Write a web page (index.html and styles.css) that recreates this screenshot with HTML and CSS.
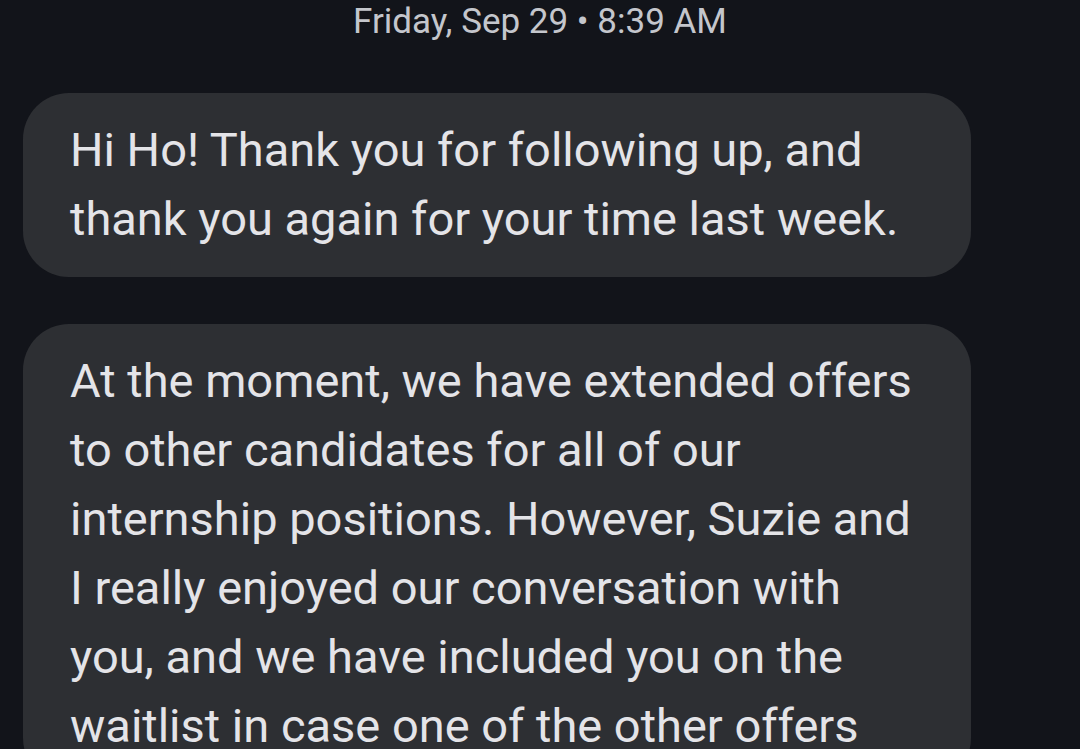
FILE: index.html
```html
<!DOCTYPE html>
<html lang="en">
<head>
    <meta charset="UTF-8">
    <meta name="viewport" content="width=device-width, initial-scale=1.0">
    <title>Messages</title>
    <link rel="stylesheet" href="styles.css">
</head>
<body>
    <div class="thread">
        <div class="timestamp">Friday, Sep 29 &bull; 8:39 AM</div>

        <div class="bubble">
            Hi Ho! Thank you for following up, and<br>
            thank you again for your time last week.
        </div>

        <div class="bubble">
            At the moment, we have extended offers<br>
            to other candidates for all of our<br>
            internship positions. However, Suzie and<br>
            I really enjoyed our conversation with<br>
            you, and we have included you on the<br>
            waitlist in case one of the other offers
        </div>
    </div>
</body>
</html>
```

FILE: styles.css
```css
:root {
    --background: #12141a;
    --bubble: #2d2f33;
    --text: #e4e4e8;
    --muted: #c4c6cc;
}

* {
    margin: 0;
    padding: 0;
    box-sizing: border-box;
    font-family: Roboto, 'Noto Sans', sans-serif;
}

html, body {
    height: 100%;
    overflow: hidden;
}

body {
    background-color: var(--background);
    color: var(--text);
}

.thread {
    display: flex;
    flex-direction: column;
    gap: 47px;
    padding: 0 23px;
}

.timestamp {
    text-align: center;
    color: var(--muted);
    font-size: 35px;
    line-height: 44px;
    margin-bottom: 2px;
}

.bubble {
    width: 948px;
    background-color: var(--bubble);
    border-radius: 46px;
    padding: 22px 47px 24px;
    font-size: 47px;
    line-height: 69px;
    white-space: nowrap;
}
```
